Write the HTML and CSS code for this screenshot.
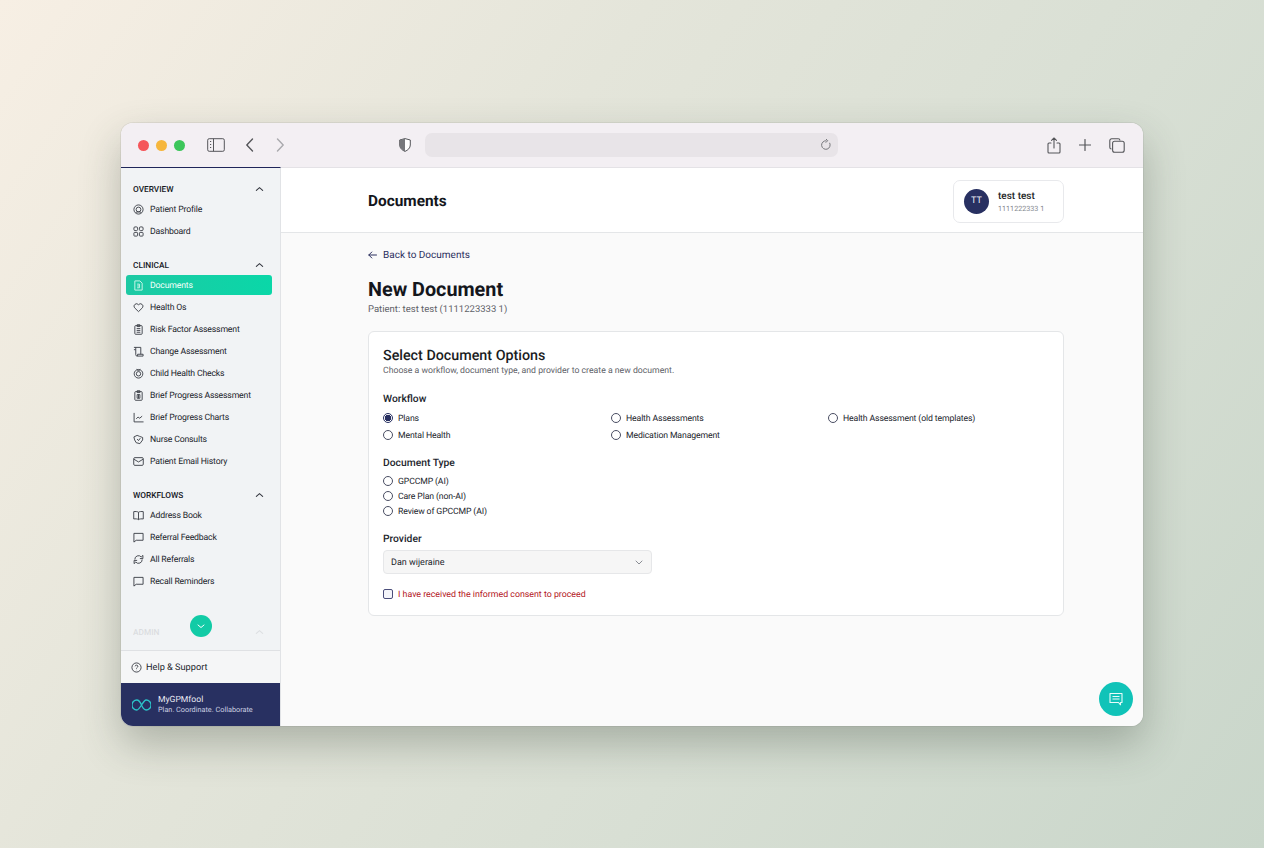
FILE: index.html
```html
<!DOCTYPE html>
<html lang="en">
<head>
    <meta charset="UTF-8">
    <meta name="viewport" content="width=device-width, initial-scale=1.0">
    <title>New Document</title>
    <link rel="stylesheet" href="styles.css">
</head>
<body>
    <div class="window">
        <div class="toolbar">
            <div class="traffic">
                <span class="dot red"></span>
                <span class="dot yellow"></span>
                <span class="dot green"></span>
            </div>
            <svg class="tb-sidebar" width="18" height="14" viewBox="0 0 18 14" fill="none" stroke="#55565a" stroke-width="1"><rect x="0.7" y="0.7" width="16.6" height="12.6" rx="1.5"/><path d="M6.5 0.7v12.6M3 3.5h1.2M3 6.5h1.2M3 9.5h1.2"/></svg>
            <svg class="tb-back" width="10" height="14" viewBox="0 0 10 14" fill="none" stroke="#55565a" stroke-width="1.4" stroke-linecap="round" stroke-linejoin="round"><path d="M7.5 1L1.8 7l5.7 6"/></svg>
            <svg class="tb-forward" width="10" height="14" viewBox="0 0 10 14" fill="none" stroke="#a9a9ad" stroke-width="1.4" stroke-linecap="round" stroke-linejoin="round"><path d="M2.5 1l5.7 6-5.7 6"/></svg>
            <svg class="tb-shield" width="12" height="14" viewBox="0 0 12 14"><path d="M6 0.6L11.3 2v5c0 3-2.4 5.2-5.3 6.4C3.100 12.200 0.700 10 0.700 7V2z" fill="#fff" stroke="#55565a"/><path d="M6 0.6L0.700 2v5c0 3 2.400 5.200 5.300 6.400z" fill="#77787c"/></svg>
            <div class="address">
                <svg width="12" height="12" viewBox="0 0 12 12" fill="none" stroke="#77787c" stroke-width="1" stroke-linecap="round"><path d="M9.800 4.200A4.300 4.300 0 1 1 6 1.700M6 0l1.700 1.700L6 3.400"/></svg>
            </div>
            <div class="tb-right">
                <svg width="14" height="17" viewBox="0 0 14 17" fill="none" stroke="#55565a" stroke-width="1.100" stroke-linecap="round" stroke-linejoin="round"><path d="M4 6H2a1 1 0 0 0-1 1v8a1 1 0 0 0 1 1h10a1 1 0 0 0 1-1V7a1 1 0 0 0-1-1h-2M7 11V1M4.500 3.300L7 1l2.500 2.300"/></svg>
                <svg width="12" height="12" viewBox="0 0 12 12" fill="none" stroke="#55565a" stroke-width="1.200" stroke-linecap="round"><path d="M6 0.500v11M0.500 6h11"/></svg>
                <svg width="16" height="15" viewBox="0 0 16 15" fill="none" stroke="#55565a" stroke-width="1.100"><path d="M2.500 11A1.800 1.800 0 0 1 0.800 9.200V2.600A1.800 1.800 0 0 1 2.600 0.800h6.600A1.800 1.800 0 0 1 11 2.500"/><rect x="3.600" y="3.200" width="11.600" height="11" rx="2"/></svg>
            </div>
        </div>

        <div class="app">
            <aside class="sidebar">
                <nav class="nav">
                    <div class="nav-section">
                        <div class="nav-heading"><span>OVERVIEW</span><svg class="caret" viewBox="0 0 10 6"><path d="M1.500 4.500L5 1.500l3.500 3"/></svg></div>
                        <a class="nav-item"><svg viewBox="0 0 12 12"><circle cx="6" cy="6" r="5"/><circle cx="6" cy="6" r="2.600"/><path d="M3 9.500c1-1.300 5-1.300 6 0"/></svg>Patient Profile</a>
                        <a class="nav-item"><svg viewBox="0 0 12 12"><rect x="1" y="1" width="4" height="4" rx="1.200"/><rect x="7" y="1" width="4" height="4" rx="1.200"/><rect x="1" y="7" width="4" height="4" rx="0.800"/><rect x="7" y="7" width="4" height="4" rx="0.800"/></svg>Dashboard</a>
                    </div>
                    <div class="nav-section">
                        <div class="nav-heading"><span>CLINICAL</span><svg class="caret" viewBox="0 0 10 6"><path d="M1.500 4.500L5 1.500l3.500 3"/></svg></div>
                        <a class="nav-item active"><svg viewBox="0 0 12 12"><path d="M2 1h5.500L10 3.500V11H2z"/><path d="M4.500 4.500h2.500v4H4.500M4.500 6.500h2.500"/></svg>Documents</a>
                        <a class="nav-item"><svg viewBox="0 0 12 12"><path d="M6 10.500L1.700 6.300A2.700 2.700 0 0 1 6 3a2.700 2.700 0 0 1 4.300 3.300z"/></svg>Health Os</a>
                        <a class="nav-item"><svg viewBox="0 0 12 12"><rect x="2" y="1.800" width="8" height="9.400" rx="0.800"/><path d="M4.500 0.800h3v2h-3zM4 5h4M4 7h4M4 9h4"/></svg>Risk Factor Assessment</a>
                        <a class="nav-item"><svg viewBox="0 0 12 12"><path d="M1 1.500h7.500V9M3 1.500V4H1M3 4v5.500a1.500 1.500 0 0 0 1.500 1.500H11V9H5v2"/></svg>Change Assessment</a>
                        <a class="nav-item"><svg viewBox="0 0 12 12"><circle cx="6" cy="6.300" r="4.700"/><circle cx="6" cy="6.300" r="2.400"/><path d="M4 1.500c1 1.500 3 1.500 4 0"/></svg>Child Health Checks</a>
                        <a class="nav-item"><svg viewBox="0 0 12 12"><rect x="2" y="1.800" width="8" height="9.400" rx="0.800"/><path d="M4.500 0.800h3v2h-3zM4.500 5h3v4h-3zM6 5v4"/></svg>Brief Progress Assessment</a>
                        <a class="nav-item"><svg viewBox="0 0 12 12"><path d="M1.200 1v9.800H11.500M3.500 7.500l2-2 1.800 1.300L10 4.500"/></svg>Brief Progress Charts</a>
                        <a class="nav-item"><svg viewBox="0 0 12 12"><path d="M1 3.200L4.500 1.500 7 2.500 10.500 3.800V6.500L7.500 10.500 3.500 9.500 1.800 6.500z"/><path d="M4.500 5.500L6 7.200 8 4.500"/></svg>Nurse Consults</a>
                        <a class="nav-item"><svg viewBox="0 0 12 12"><rect x="0.800" y="1.800" width="10.400" height="8.400" rx="1.200"/><path d="M1 3.500L6 6.500l5-3"/></svg>Patient Email History</a>
                    </div>
                    <div class="nav-section">
                        <div class="nav-heading"><span>WORKFLOWS</span><svg class="caret" viewBox="0 0 10 6"><path d="M1.500 4.500L5 1.500l3.500 3"/></svg></div>
                        <a class="nav-item"><svg viewBox="0 0 12 12"><path d="M6 2.500C5 1.600 2.500 1.500 0.800 1.800V9.800C2.500 9.500 5 9.600 6 10.500 7 9.600 9.500 9.500 11.200 9.800V1.800C9.500 1.500 7 1.600 6 2.500zM6 2.500v8"/></svg>Address Book</a>
                        <a class="nav-item"><svg viewBox="0 0 12 12"><path d="M1 1.500h10v7.500H3.500L1 11z"/></svg>Referral Feedback</a>
                        <a class="nav-item"><svg viewBox="0 0 12 12"><path d="M2 6a4 4 0 0 1 7-2.800L10.800 1.500V5H7.500M10 6a4 4 0 0 1-7 2.800L1.200 10.500V7H4.500"/></svg>All Referrals</a>
                        <a class="nav-item"><svg viewBox="0 0 12 12"><path d="M1 1.500h10v7.500H3.500L1 11z"/></svg>Recall Reminders</a>
                    </div>
                    <div class="nav-section faded">
                        <div class="nav-heading"><span>ADMIN</span><svg class="caret" viewBox="0 0 10 6"><path d="M1.500 4.500L5 1.500l3.500 3"/></svg></div>
                    </div>
                    <button class="scroll-btn" type="button"><svg width="8" height="5" viewBox="0 0 8 5" fill="none" stroke="#fff" stroke-width="1" stroke-linecap="round"><path d="M1 1l3 2.500L7 1"/></svg></button>
                </nav>
                <a class="help"><svg viewBox="0 0 12 12"><circle cx="6" cy="6" r="5"/><path d="M4.500 4.700C4.500 3 7.500 3 7.500 4.700 7.500 6 6 5.800 6 7.200M6 8.600v0.300"/></svg>Help &amp; Support</a>
                <div class="brand">
                    <svg width="19" height="12" viewBox="0 0 19 12" fill="none" stroke="#2bc4c9" stroke-width="1.300"><path d="M9.500 6C8 2.500 6.500 1 4.800 1A4.800 5 0 0 0 4.800 11C8 11 11 1 14.200 1A4.800 5 0 0 1 14.200 11C12.500 11 11 9.500 9.500 6z"/></svg>
                    <div>
                        <div class="brand-name">MyGPMfool</div>
                        <div class="brand-tag">Plan. Coordinate. Collaborate</div>
                    </div>
                </div>
            </aside>

            <main class="main">
                <header class="page-header">
                    <div class="page-header-inner">
                        <h2>Documents</h2>
                        <div class="patient-chip">
                            <span class="avatar">TT</span>
                            <div class="chip-text">
                                <div class="chip-name">test test</div>
                                <div class="chip-id">1111222333 1</div>
                            </div>
                        </div>
                    </div>
                </header>
                <div class="content">
                    <a class="back-link"><svg width="9" height="8" viewBox="0 0 9 8" fill="none" stroke="#2b2f5e" stroke-width="1" stroke-linecap="round" stroke-linejoin="round"><path d="M8.500 4H0.800M3.800 1L0.800 4l3 3"/></svg>Back to Documents</a>
                    <h1>New Document</h1>
                    <p class="patient-line">Patient: test test (1111223333 1)</p>

                    <form class="card">
                        <h3>Select Document Options</h3>
                        <p class="card-sub">Choose a workflow, document type, and provider to create a new document.</p>

                        <div class="field-label workflow-label">Workflow</div>
                        <div class="workflow-grid">
                            <label class="option"><input type="radio" name="workflow" checked>Plans</label>
                            <label class="option"><input type="radio" name="workflow">Health Assessments</label>
                            <label class="option"><input type="radio" name="workflow">Health Assessment (old templates)</label>
                            <label class="option"><input type="radio" name="workflow">Mental Health</label>
                            <label class="option"><input type="radio" name="workflow">Medication Management</label>
                        </div>

                        <div class="field-label type-label">Document Type</div>
                        <div class="type-list">
                            <label class="option"><input type="radio" name="doctype">GPCCMP (AI)</label>
                            <label class="option"><input type="radio" name="doctype">Care Plan (non-AI)</label>
                            <label class="option"><input type="radio" name="doctype">Review of GPCCMP (AI)</label>
                        </div>

                        <div class="field-label provider-label">Provider</div>
                        <div class="select">
                            <span>Dan wijeraine</span>
                            <svg width="8" height="5" viewBox="0 0 8 5" fill="none" stroke="#8a8d94" stroke-width="1" stroke-linecap="round"><path d="M1 1l3 3 3-3"/></svg>
                        </div>

                        <label class="consent"><input type="checkbox">I have received the informed consent to proceed</label>
                    </form>
                </div>
                <button class="chat-btn" type="button"><svg width="14" height="14" viewBox="0 0 14 14" fill="none" stroke="#e8fbfa" stroke-width="1.100" stroke-linejoin="round"><path d="M1 1.500h12v9h-1.500v2.300L9.500 10.500H1z"/><path d="M3.500 4.500h7M3.500 7h7"/></svg></button>
            </main>
        </div>
    </div>
</body>
</html>
```

FILE: styles.css
```css
* {
    margin: 0;
    padding: 0;
    box-sizing: border-box;
    font-family: Roboto, 'Noto Sans', sans-serif;
    text-rendering: geometricPrecision;
}

html, body {
    height: 848px;
    overflow: hidden;
}

body {
    background: linear-gradient(125deg, #f7efe4 0%, #e4e5da 35%, #d8dfd4 65%, #c9d6ca 100%);
    padding: 123px 121px 122px;
}

.window {
    height: 603px;
    border-radius: 12px;
    overflow: hidden;
    background: #fafafa;
    box-shadow: 0 18px 40px rgba(60, 70, 60, 0.32), 0 0 0 1px rgba(120, 120, 120, 0.12);
    display: flex;
    flex-direction: column;
}

/* browser chrome */
.toolbar {
    height: 45px;
    flex-shrink: 0;
    background: #f3eff3;
    display: flex;
    align-items: center;
    padding-left: 17px;
    border-bottom: 1px solid #e4e2e6;
}

.traffic {
    display: flex;
    gap: 7px;
}

.dot {
    width: 11px;
    height: 11px;
    border-radius: 50%;
}

.red { background: #f5565a; }
.yellow { background: #f6b63c; }
.green { background: #3cc65a; }

.tb-sidebar { margin-left: 22px; }
.tb-back { margin-left: 20px; }
.tb-forward { margin-left: 20px; }
.tb-shield { margin-left: 114px; }

.address {
    width: 413px;
    height: 24px;
    margin-left: 14px;
    background: #e8e4e8;
    border-radius: 7px;
    display: flex;
    align-items: center;
    justify-content: flex-end;
    padding-right: 6px;
}

.tb-right {
    margin-left: auto;
    padding-right: 18px;
    display: flex;
    align-items: center;
    gap: 18px;
}

.app {
    flex: 1;
    min-height: 0;
    display: flex;
}

/* sidebar */
.sidebar {
    width: 160px;
    flex-shrink: 0;
    background: #f1f3f5;
    border-right: 1px solid #e1e3e6;
    border-top: 1px solid #1f2559;
    margin-top: -1px;
    display: flex;
    flex-direction: column;
}

.nav {
    flex: 1;
    min-height: 0;
    position: relative;
    padding: 15px 5px 0 5px;
    border-bottom: 1px solid #dfe1e4;
    overflow: hidden;
}

.nav-section {
    margin-bottom: 17px;
}

.nav-heading {
    height: 12px;
    display: flex;
    justify-content: space-between;
    align-items: center;
    padding: 2px 11px 0 7px;
    font-size: 8.300px;
    font-weight: 500;
    color: #16181f;
    margin-bottom: 3px;
}

.caret {
    width: 9px;
    height: 6px;
    margin-top: -2px;
    fill: none;
    stroke: #33363e;
    stroke-width: 1.200;
    stroke-linecap: round;
}

.nav-item {
    height: 22px;
    display: flex;
    align-items: center;
    gap: 6px;
    padding: 2px 0 0 7px;
    font-size: 8.700px;
    letter-spacing: -0.17px;
    color: #22252c;
    border-radius: 3px;
}

.nav-item svg {
    margin-top: -2px;
}

.nav-item svg, .help svg {
    width: 11px;
    height: 11px;
    flex-shrink: 0;
    fill: none;
    stroke: #3b3e46;
    stroke-width: 1;
}

.nav-item.active {
    height: 20px;
    margin: 4px 3px 1px 0;
    background: linear-gradient(90deg, #1ec9a4, #0ad7a8);
    color: #f4fffb;
}

.nav-item.active svg {
    stroke: #d5f7ec;
}

.faded {
    opacity: 0.1;
    margin-top: 34px;
}

.scroll-btn {
    position: absolute;
    left: 69px;
    top: 447px;
    width: 22px;
    height: 22px;
    border: none;
    border-radius: 50%;
    background: #12cba6;
    display: flex;
    align-items: center;
    justify-content: center;
}

.help {
    height: 32px;
    flex-shrink: 0;
    display: flex;
    align-items: center;
    gap: 4px;
    padding-left: 10px;
    font-size: 9.200px;
    color: #22252c;
    background: #f5f6f7;
}

.brand {
    height: 43px;
    flex-shrink: 0;
    background: #283061;
    display: flex;
    align-items: center;
    gap: 7px;
    padding-left: 11px;
    color: #e8eaf3;
}

.brand-name {
    font-size: 8.600px;
    line-height: 11px;
}

.brand-tag {
    font-size: 7.300px;
    line-height: 8px;
    color: #cdd1e2;
}

/* main area */
.main {
    flex: 1;
    min-width: 0;
    position: relative;
    background: #fafafa;
}

.page-header {
    height: 65px;
    background: #fff;
    border-bottom: 1px solid #e4e6e8;
    padding: 2px 79px 0 87px;
}

.page-header-inner {
    height: 100%;
    display: flex;
    align-items: center;
    justify-content: space-between;
}

.page-header h2 {
    font-size: 15.400px;
    font-weight: 700;
    color: #14161c;
}

.patient-chip {
    width: 111px;
    height: 43px;
    border: 1px solid #e8e9ec;
    border-radius: 7px;
    background: #fff;
    display: flex;
    align-items: center;
    gap: 9px;
    padding-left: 10px;
}

.avatar {
    width: 25px;
    height: 25px;
    border-radius: 50%;
    background: #283061;
    color: #eef0f7;
    font-size: 9px;
    display: flex;
    align-items: center;
    justify-content: center;
}

.chip-text {
    padding-top: 2px;
}

.chip-name {
    font-size: 10px;
    line-height: 12px;
    font-weight: 500;
    color: #1b1d24;
}

.chip-id {
    font-size: 7.200px;
    line-height: 11px;
    color: #85888f;
}

.content {
    padding: 16px 79px 0 87px;
}

.back-link {
    height: 12px;
    display: flex;
    align-items: center;
    gap: 6px;
    font-size: 10px;
    color: #2b2f5e;
}

.content h1 {
    margin-top: 17px;
    font-size: 19.800px;
    line-height: 24px;
    font-weight: 700;
    color: #14161c;
}

.patient-line {
    font-size: 9.500px;
    line-height: 13px;
    margin-top: 1px;
    color: #5e6168;
}

.card {
    margin-top: 15px;
    height: 285px;
    background: #fff;
    border: 1px solid #e4e6e8;
    border-radius: 6px;
    padding: 15px 14px 0;
}

.card h3 {
    font-size: 14.300px;
    line-height: 19px;
    font-weight: 500;
    color: #1a1c22;
}

.card-sub {
    font-size: 8.700px;
    line-height: 11px;
    color: #5e6168;
}

.field-label {
    font-size: 10.300px;
    line-height: 14px;
    font-weight: 500;
    color: #22252c;
}

.workflow-label { margin-top: 15px; }
.type-label { margin-top: 15px; }
.provider-label { margin-top: 15px; }

.workflow-grid {
    margin-top: 6px;
    display: grid;
    grid-template-columns: 228px 217px 1fr;
    row-gap: 5px;
}

.type-list {
    margin-top: 5px;
    display: flex;
    flex-direction: column;
    gap: 3px;
}

.option {
    height: 12px;
    display: flex;
    align-items: center;
    gap: 5px;
    padding-top: 2px;
    font-size: 8.700px;
    letter-spacing: -0.13px;
    color: #22252c;
}

.option input {
    appearance: none;
    width: 10px;
    height: 10px;
    margin-top: -2px;
    border: 1px solid #4a4e63;
    border-radius: 50%;
    background: #fff;
}

.option input:checked {
    border-color: #283061;
    background: radial-gradient(circle, #283061 0 3px, #fff 3.500px);
}

.select {
    margin-top: 4px;
    width: 269px;
    height: 24px;
    background: #f6f6f6;
    border: 1px solid #e6e7e9;
    border-radius: 4px;
    display: flex;
    align-items: center;
    justify-content: space-between;
    padding: 1px 8px 0 7px;
    font-size: 9px;
    color: #22252c;
}

.consent {
    margin-top: 14px;
    height: 12px;
    display: flex;
    align-items: center;
    gap: 5px;
    padding-top: 2px;
    font-size: 8.800px;
    color: #b3141c;
}

.consent input {
    appearance: none;
    width: 10px;
    height: 10px;
    margin-top: -2px;
    border: 1px solid #4a4e7a;
    border-radius: 2px;
    background: #f4f5fa;
}

.chat-btn {
    position: absolute;
    right: 10px;
    bottom: 10px;
    width: 34px;
    height: 34px;
    border: none;
    border-radius: 50%;
    background: #10c3b8;
    display: flex;
    align-items: center;
    justify-content: center;
}
```
